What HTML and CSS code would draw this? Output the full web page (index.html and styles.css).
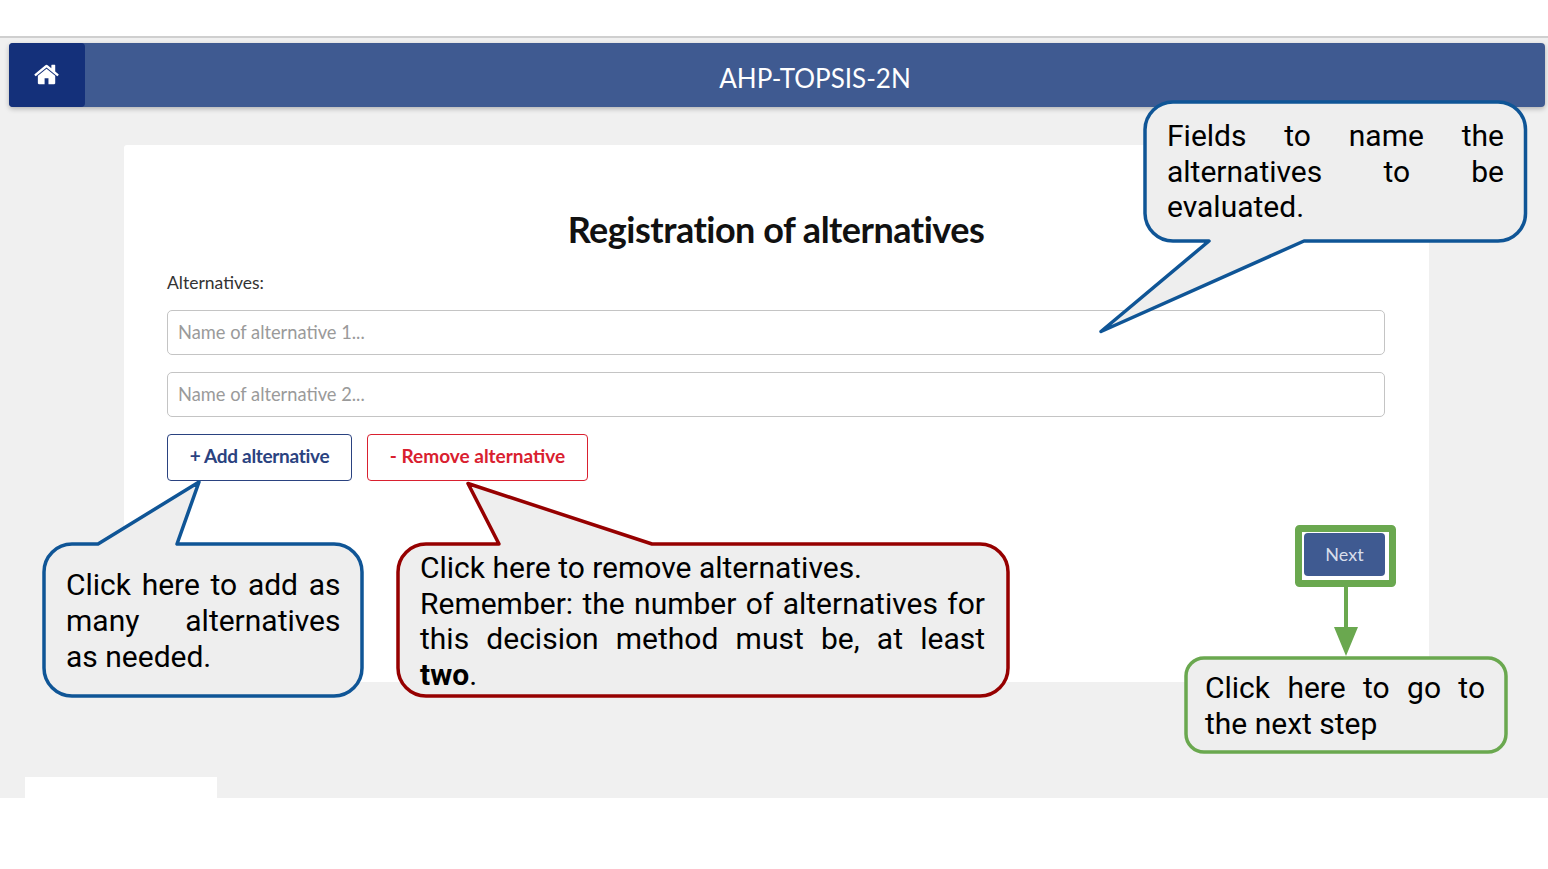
FILE: index.html
```html
<!DOCTYPE html>
<html>
<head>
  <title>AHP-TOPSIS-2N</title>
  <link rel="stylesheet" href="styles.css">
</head>
<body>

  <div class="top-strip"></div>

  <div class="page">
    <header class="navbar">
      <a class="home-btn">
        <svg class="home-icon" viewBox="0 0 1792 1792"><path fill="#fff" d="M1408 992v480q0 26-19 45t-45 19h-384v-384h-256v384h-384q-26 0-45-19t-19-45v-480q0-1 .5-3t.5-3l575-474 575 474q1 2 1 6zm223-69l-62 74q-8 9-21 11h-3q-13 0-21-7l-692-577-692 577q-12 8-24 7-13-2-21-11l-62-74q-8-10-7-23.500t11-21.500l719-599q32-26 76-26t76 26l244 204v-195q0-14 9-23t23-9h192q14 0 23 9t9 23v408l219 182q10 8 11 21.500t-7 23.500z"/></svg>
      </a>
      <div class="navbar-title">AHP-TOPSIS-2N</div>
    </header>

    <main class="card">
      <h1>Registration of alternatives</h1>
      <label class="field-label">Alternatives:</label>
      <input class="text-input" type="text" placeholder="Name of alternative 1...">
      <input class="text-input" type="text" placeholder="Name of alternative 2...">
      <div class="btn-row">
        <button class="btn btn-add">+ Add alternative</button>
        <button class="btn btn-remove">- Remove alternative</button>
      </div>
      <div class="next-row">
        <button class="btn-next">Next</button>
      </div>
    </main>

    <div class="footer-tab"></div>
  </div>

  <!-- Callout shapes -->
  <svg class="callout-shapes" width="1548" height="869" viewBox="0 0 1548 869">
    <g fill="#eeeeee" stroke-width="3.500" stroke-linejoin="round">
      <path stroke="#0f5596" d="M1173 102H1498a27.500 27.500 0 0 1 27.500 27.500V213.500a27.500 27.500 0 0 1-27.500 27.500H1304L1101 331.500 1209 241H1173a28 28 0 0 1-28-27.500V129.500a28 28 0 0 1 28-27.500z"/>
      <path stroke="#0f5596" d="M98 544 199 482 177 544H334a28 28 0 0 1 28 28V668a28 28 0 0 1-28 28H72a28 28 0 0 1-28-28V572a28 28 0 0 1 28-28z"/>
      <path stroke="#960000" d="M426 544H499L468 483.500 652 544H980a28 28 0 0 1 28 28V668a28 28 0 0 1-28 28H426a28 28 0 0 1-28-28V572a28 28 0 0 1 28-28z"/>
      <rect stroke="#6aa84f" x="1186" y="658" width="320" height="94" rx="18"/>
    </g>
    <rect x="1298.500" y="528.500" width="94" height="55" fill="none" stroke="#6aa84f" stroke-width="7" rx="1"/>
    <path fill="#6aa84f" d="M1344 587h4v40h10l-12 29-12-29h10z"/>
  </svg>

  <!-- Callout texts -->
  <p class="note note-fields">Fields to name the alternatives to be evaluated.</p>
  <p class="note note-add">Click here to add as many alternatives as needed.</p>
  <p class="note note-remove">Click here to remove alternatives.<br>Remember: the number of alternatives for this decision method must be, at least <b>two</b>.</p>
  <p class="note note-next">Click here to go to the next step</p>

</body>
</html>
```

FILE: styles.css
```css
* {
  box-sizing: border-box;
}

body, html {
  margin: 0;
  height: 869px;
  overflow: hidden;
  background-color: #fff;
  font-family: Lato, "Open Sans", sans-serif;
}

.top-strip {
  height: 38px;
  border-bottom: 2px solid #cfcfcf;
}

.page {
  height: 760px;
  background-color: #f0f0f0;
  display: flex;
  flex-direction: column;
}

.navbar {
  display: flex;
  height: 64px;
  margin: 5px 3px 38px 9px;
  background-color: #3f5a91;
  border-radius: 4px;
  box-shadow: 0 2px 5px rgba(0,0,0,0.25);
}

.home-btn {
  width: 76px;
  display: flex;
  justify-content: center;
  align-items: center;
  background-color: #14307a;
  border-radius: 4px;
}

.home-icon {
  width: 27px;
  height: 27px;
  margin-bottom: 2px;
}

.navbar-title {
  flex: 1;
  text-align: center;
  line-height: 71px;
  font-size: 26px;
  color: #fff;
}

.card {
  width: 1305px;
  height: 537px;
  margin-left: 124px;
  padding: 64px 44px 0 43px;
  background-color: #fff;
  border-radius: 3px;
}

h1 {
  margin: 0 0 24px;
  text-align: center;
  font-size: 36px;
  line-height: 40px;
  font-weight: 700;
  letter-spacing: -0.5px;
  color: #111;
}

.field-label {
  display: block;
  margin-bottom: 17px;
  font-size: 17.500px;
  line-height: 20px;
  color: #333;
}

.text-input {
  display: block;
  width: 100%;
  height: 45px;
  margin-bottom: 17px;
  padding: 0 10px 2px;
  border: 1.500px solid #c4c4c4;
  border-radius: 5px;
  font-family: inherit;
  font-size: 18.300px;
}

.text-input::placeholder {
  color: #9a9a9a;
}

.btn-row {
  display: flex;
  gap: 15px;
}

.btn {
  height: 47px;
  padding: 0 0 4px;
  background-color: #fff;
  border-radius: 4px;
  font-family: inherit;
  font-size: 19px;
  font-weight: 700;
  letter-spacing: -0.3px;
}

.btn-add {
  width: 185px;
  border: 1.500px solid #2a4280;
  color: #2a4280;
}

.btn-remove {
  width: 221px;
  border: 1.500px solid #d9202f;
  color: #d9202f;
  letter-spacing: 0;
}

.next-row {
  display: flex;
  justify-content: flex-end;
  margin-top: 52px;
}

.btn-next {
  width: 81px;
  height: 43px;
  padding: 0 0 2px;
  background-color: #3f5a91;
  border: none;
  border-radius: 4px;
  font-family: inherit;
  font-size: 18px;
  color: #d8deeb;
}

.footer-tab {
  width: 192px;
  height: 21px;
  margin: auto 0 0 25px;
  background-color: #fff;
}

.callout-shapes {
  position: absolute;
  top: 0;
  left: 0;
}

.note {
  position: absolute;
  margin: 0;
  font-family: Roboto, sans-serif;
  font-size: 30px;
  line-height: 35.700px;
  color: #000;
  text-align: justify;
}

.note-fields {
  left: 1167px;
  top: 117.800px;
  width: 337px;
}

.note-add {
  left: 66px;
  top: 567.300px;
  width: 274.500px;
}

.note-remove {
  left: 420px;
  top: 549.800px;
  width: 565px;
}

.note-next {
  left: 1205px;
  top: 670px;
  width: 280px;
}
```
